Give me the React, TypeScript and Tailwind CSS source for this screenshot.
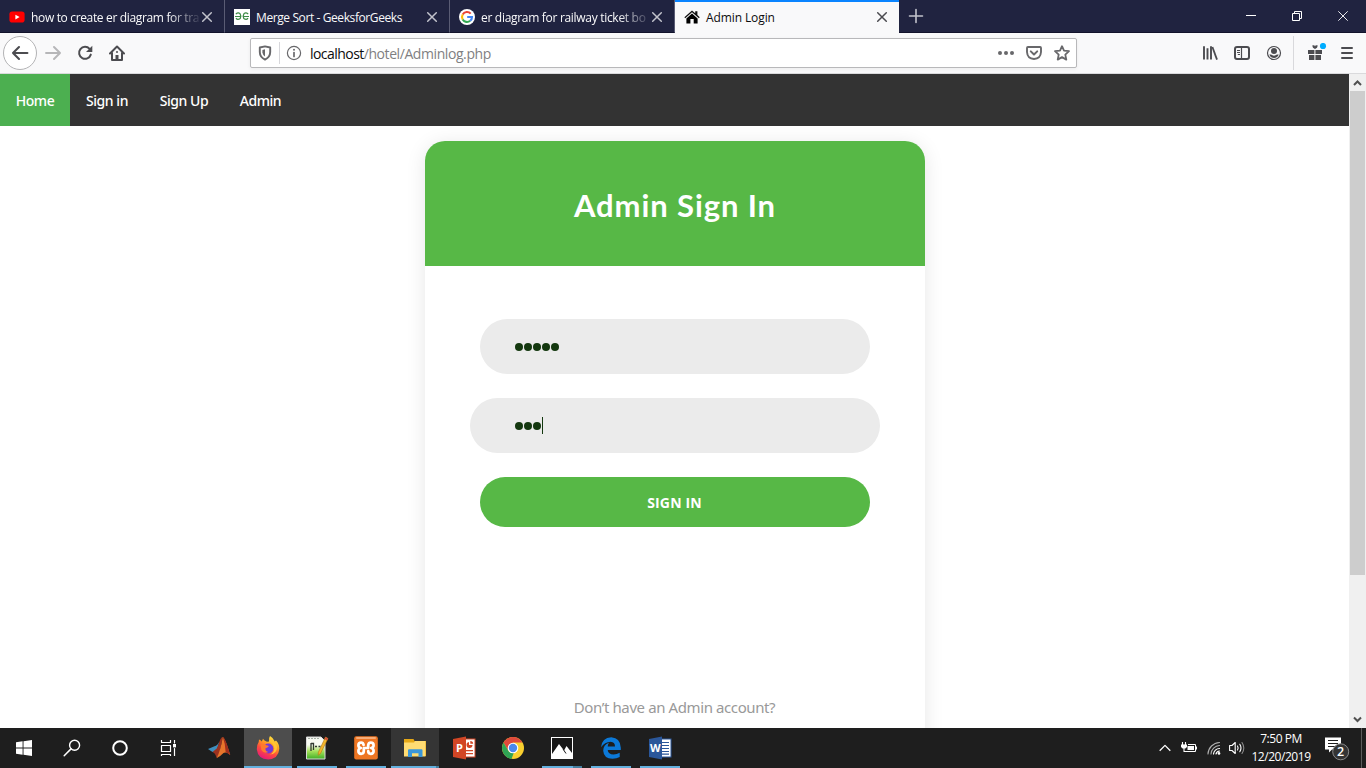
import React from "react";

const stroke = {
  fill: "none",
  stroke: "currentColor",
  strokeLinecap: "round" as const,
  strokeLinejoin: "round" as const,
};

function CloseIcon({ className }: { className: string }) {
  return (
    <svg className={`shrink-0 ${className}`} width="16" height="16" viewBox="0 0 16 16">
      <path d="M3.7 3.7 L12.3 12.3 M12.3 3.7 L3.7 12.3" {...stroke} strokeWidth="1.5" />
    </svg>
  );
}

function YouTubeIcon() {
  return (
    <svg width="16" height="16" viewBox="0 0 16 16">
      <rect x="0.4" y="2.6" width="15.2" height="11" rx="2.8" fill="#ff0000" />
      <path d="M6.4 5.8 L10.6 8.1 L6.4 10.4Z" fill="#fff" />
    </svg>
  );
}

function GeeksIcon() {
  return (
    <svg width="16" height="16" viewBox="0 0 16 16">
      <rect width="16" height="16" fill="#fff" />
      <g fill="none" stroke="#3c8a45" strokeWidth="1.2">
        <path d="M1.8 5.2 Q4 3 6 4.6 Q7.6 7.2 6.2 9.6 Q3.5 11.4 2 9.2 M1 7.5 H7.4" />
        <path d="M14.2 5.2 Q12 3 10 4.6 Q8.4 7.2 9.8 9.6 Q12.5 11.4 14 9.2 M8.6 7.5 H15" />
      </g>
    </svg>
  );
}

function GoogleIcon() {
  return (
    <svg width="16" height="16" viewBox="0 0 16 16">
      <circle cx="8" cy="8" r="8" fill="#fff" />
      <g fill="none" strokeWidth="2.1">
        <path d="M3.7 5.5 A5 5 0 0 1 11.7 4.6" stroke="#ea4335" />
        <path d="M3.7 5.5 A5 5 0 0 0 3.7 10.5" stroke="#fbbc05" />
        <path d="M3.7 10.5 A5 5 0 0 0 11.2 11.8" stroke="#34a853" />
        <path d="M11.2 11.8 A5 5 0 0 0 13 8 H8.2" stroke="#4285f4" />
      </g>
    </svg>
  );
}

function HouseIcon() {
  return (
    <svg width="16" height="16" viewBox="0 0 16 16">
      <path d="M0.4 8.2 L8 1.4 L11.2 4.2 V2.2 H13.4 V6.1 L15.7 8.2 L14.9 9.2 L8 3.2 L1.2 9.2Z" fill="#111" />
      <path d="M2.4 9.4 L8 4.5 L13.6 9.4 V14.4 H9.7 V10 H6.4 V14.4 H2.4Z" fill="#000" />
    </svg>
  );
}

function Tab({
  icon,
  title,
  spacing,
  active,
  fade,
}: {
  icon: React.ReactNode;
  title: string;
  spacing: string;
  active?: boolean;
  fade?: boolean;
}) {
  return (
    <div
      className={
        active
          ? "flex h-[33px] w-[224px] items-center border-t-2 border-[#0a84ff] bg-[#f9f9fa] pl-[9px] pr-[9px] pb-px text-[#0c0c0d]"
          : "flex h-[33px] w-[225px] items-center border-r border-b border-r-[#5a5c74] border-b-[#12132b] bg-[#202340] pl-[9px] pr-[9px] pt-[2px] text-[#f9f9fa]"
      }
    >
      <span className="shrink-0">{icon}</span>
      <span
        className={`mt-px ml-[6px] min-w-0 flex-1 text-[12px] leading-[18px] whitespace-nowrap ${spacing} ${
          fade ? "[mask-image:linear-gradient(to_right,#000_82%,transparent_102%)]" : ""
        }`}
      >
        {title}
      </span>
      <CloseIcon className={active ? "text-[#4a4a4f]" : "text-[#c2c3cc]"} />
    </div>
  );
}

function TabBar() {
  return (
    <div className="flex h-[33px] bg-[#202340]">
      <Tab icon={<YouTubeIcon />} title="how to create er diagram for tra" spacing="tracking-[-0.34px]" fade />
      <Tab icon={<GeeksIcon />} title="Merge Sort - GeeksforGeeks" spacing="tracking-[-0.4px]" />
      <Tab icon={<GoogleIcon />} title="er diagram for railway ticket bo" spacing="tracking-[-0.3px]" fade />
      <Tab icon={<HouseIcon />} title="Admin Login" spacing="tracking-[-0.1px]" active />
      <div className="flex flex-1 items-center border-b border-[#12132b] pl-[9px] text-[#c2c3cc]">
        <svg width="16" height="16" viewBox="0 0 16 16">
          <path d="M8 1.5 V14.5 M1.5 8 H14.5" {...stroke} strokeWidth="1.6" />
        </svg>
      </div>
      <div className="flex items-center border-b border-[#12132b] text-white">
        <div className="flex w-[46px] justify-center">
          <svg width="10" height="10" viewBox="0 0 10 10">
            <path d="M0 4.5 H10" stroke="currentColor" />
          </svg>
        </div>
        <div className="flex w-[46px] justify-center">
          <svg width="10" height="10" viewBox="0 0 10 10" fill="none" stroke="currentColor">
            <path d="M2.5 2.5 V0.5 H9.5 V7.5 H7.5 M0.5 2.5 H7.5 V9.5 H0.5Z" />
          </svg>
        </div>
        <div className="flex w-[46px] justify-center">
          <svg width="10" height="10" viewBox="0 0 10 10">
            <path d="M0.3 0.3 L9.7 9.7 M9.7 0.3 L0.3 9.7" stroke="currentColor" strokeWidth="0.9" />
          </svg>
        </div>
      </div>
    </div>
  );
}

function Toolbar() {
  return (
    <div className="flex h-[41px] items-center border-b border-[#dadadc] bg-[#f9f9fa] text-[#4c4c50]">
      <div className="ml-[3px] flex size-[34px] shrink-0 items-center justify-center rounded-full border border-[#b3b3b5] bg-white">
        <svg width="18" height="16" viewBox="0 0 18 16">
          <path d="M16.4 8 H2 M8 2 L2 8 L8 14" {...stroke} strokeWidth="2.1" />
        </svg>
      </div>
      <svg className="ml-[8px] text-[#b6b6b8]" width="16" height="16" viewBox="0 0 16 16">
        <path d="M1 8 H14.5 M9 2 L15 8 L9 14" {...stroke} strokeWidth="1.9" />
      </svg>
      <svg className="ml-[16px]" width="16" height="16" viewBox="0 0 16 16">
        <path d="M12.6 3.8 A6 6 0 1 0 13.8 9.6" {...stroke} strokeWidth="2" />
        <path d="M15.3 0.8 V7 H9Z" fill="currentColor" />
      </svg>
      <svg className="ml-[16px]" width="16" height="16" viewBox="0 0 16 16">
        <path d="M1 8.5 L8 1.5 L15 8.5" {...stroke} strokeWidth="2" />
        <path d="M3 8 V15 H13 V8" {...stroke} strokeWidth="2" />
        <path d="M6.5 15 V10 H9.5 V15Z" fill="currentColor" />
        <circle cx="8" cy="7" r="1" fill="currentColor" />
      </svg>

      <div className="ml-[125px] flex h-[30px] w-[827px] shrink-0 items-center rounded-[2px] border border-[#b8b8ba] bg-white shadow-[0_1px_4px_rgba(0,0,0,0.06)]">
        <svg className="ml-[6px] text-[#68686b]" width="16" height="16" viewBox="0 0 16 16">
          <path d="M8 1.4 L13.2 2.5 V7 Q13.2 12 8 14.6 Q2.8 12 2.8 7 V2.5Z" {...stroke} strokeWidth="1.9" />
          <path d="M8 4.3 L5.4 4.9 V7.5 Q5.7 10 8 11.4Z" fill="currentColor" />
        </svg>
        <div className="ml-[6px] h-[22px] w-px bg-[#d7d7db]" />
        <svg className="ml-[6px] text-[#68686b]" width="16" height="16" viewBox="0 0 16 16">
          <circle cx="8" cy="8" r="6.6" {...stroke} strokeWidth="1.2" />
          <path d="M8 7.5 V11.5" {...stroke} strokeWidth="1.7" />
          <circle cx="8" cy="4.8" r="1" fill="currentColor" />
        </svg>
        <div className="mt-[2px] ml-[8px] flex-1 text-[14px] leading-[20px] tracking-[-0.42px] whitespace-nowrap text-[#7f7f82]">
          <span className="tracking-[-0.55px] text-[#0c0c0d]">localhost</span>/hotel/Adminlog.php
        </div>
        <svg className="mr-[12px] text-[#68686b]" width="16" height="16" viewBox="0 0 16 16" fill="currentColor">
          <circle cx="2" cy="8" r="2" />
          <circle cx="8" cy="8" r="2" />
          <circle cx="14" cy="8" r="2" />
        </svg>
        <svg className="mr-[12px] text-[#68686b]" width="16" height="16" viewBox="0 0 16 16">
          <path d="M1.9 2 H14.1 Q15 2 15 3 V7 Q14.6 13.6 8 14 Q1.4 13.6 1 7 V3 Q1 2 1.9 2Z" {...stroke} strokeWidth="1.9" />
          <path d="M4.8 6.4 L8 9.5 L11.2 6.4" {...stroke} strokeWidth="2" />
        </svg>
        <svg className="mr-[6px] text-[#68686b]" width="16" height="16" viewBox="0 0 16 16">
          <path
            d="M8 1.2 L10 5.7 L15 6.2 L11.3 9.6 L12.3 14.6 L8 12.1 L3.7 14.6 L4.7 9.6 L1 6.2 L6 5.7Z"
            {...stroke}
            strokeWidth="1.8"
          />
        </svg>
      </div>

      <svg className="ml-[125px]" width="16" height="16" viewBox="0 0 16 16">
        <path d="M2 1.2 V14.6 M5.5 3.2 V14.6 M9 1.2 V14.6" {...stroke} strokeWidth="1.9" strokeLinecap="butt" />
        <path d="M10.4 2 L15 14.6" {...stroke} strokeWidth="1.8" strokeLinecap="butt" />
      </svg>
      <svg className="ml-[16px]" width="16" height="16" viewBox="0 0 16 16">
        <rect x="1" y="2" width="14" height="12" rx="2" {...stroke} strokeWidth="2" />
        <path d="M7.5 2 V14" {...stroke} strokeWidth="1.2" />
        <path d="M3 5.5 H6 M3 7.5 H6 M3.8 9.5 H6" {...stroke} strokeWidth="1" strokeLinecap="butt" />
      </svg>
      <svg className="ml-[16px]" width="16" height="16" viewBox="0 0 16 16">
        <circle cx="8" cy="8" r="6.5" {...stroke} strokeWidth="1.2" />
        <circle cx="8" cy="6.1" r="3" fill="currentColor" />
        <path d="M3.3 9.6 H5 Q8 11.8 11 9.6 H12.7 Q11.5 13 8 13 Q4.5 13 3.3 9.6Z" fill="currentColor" />
      </svg>
      <div className="ml-[11px] h-[34px] w-px bg-[#d9d9dc]" />
      <svg className="ml-[12px]" width="22" height="20" viewBox="0 0 22 20">
        <path d="M2 7 H8.4 V11 H2Z M9.4 7 H16 V11 H9.4Z M3 12 H8.4 V17 H3Z M9.4 12 H15 V17 H9.4Z" fill="currentColor" />
        <path d="M6.2 2.5 Q8.8 1.5 9 3.6 Q9.2 1.5 11.8 2.5 L11 4.8 L9 6 L7 4.8Z" fill="currentColor" />
        <circle cx="17" cy="3" r="3.1" fill="#00adff" />
      </svg>
      <svg className="ml-[11px]" width="16" height="16" viewBox="0 0 16 16">
        <path d="M3 3 H13 M3 8 H13 M3 13 H13" {...stroke} strokeWidth="2" />
      </svg>
    </div>
  );
}

const navItems = [
  { label: "Home", width: "w-[70px]", active: true },
  { label: "Sign in", width: "w-[74px]" },
  { label: "Sign Up", width: "w-[80px]" },
  { label: "Admin", width: "w-[73px]" },
];

function PasswordDots({ count }: { count: number }) {
  return (
    <div className="flex gap-px">
      {Array.from({ length: count }, (_, i) => (
        <span key={i} className="size-[8px] rounded-full bg-[#14380f]" />
      ))}
    </div>
  );
}

function Page() {
  return (
    <div className="flex h-[654px] overflow-hidden bg-white">
      <div className="flex w-[1349px] flex-col font-['Noto_Sans',sans-serif]">
        <nav className="flex h-[52px] shrink-0 bg-[#333333]">
          {navItems.map((item) => (
            <a
              key={item.label}
              className={`flex items-center justify-center text-[14px] font-medium tracking-[-0.45px] whitespace-nowrap text-white ${item.width} ${
                item.active ? "bg-[#4caf50]" : ""
              }`}
            >
              {item.label}
            </a>
          ))}
        </nav>
        <main className="flex flex-1 justify-center overflow-hidden pt-[15px]">
          <form className="flex h-[680px] w-[500px] shrink-0 flex-col items-center rounded-[20px] bg-white shadow-[0_3px_20px_rgba(0,0,0,0.1)]">
            <h1 className="flex h-[125px] w-full items-center justify-center rounded-t-[20px] bg-[#57b846] pt-[3px] pl-px font-['Lato',sans-serif] text-[31px] font-bold tracking-[0.9px] text-white">
              Admin Sign In
            </h1>
            <div className="mt-[53px] flex h-[55px] w-[390px] shrink-0 items-center rounded-full bg-[#ebebeb] pt-px pl-[35px]">
              <PasswordDots count={5} />
            </div>
            <div className="mt-[24px] flex h-[55px] w-[410px] shrink-0 items-center rounded-full bg-[#ebebeb] pl-[45px]">
              <div className="pt-px">
                <PasswordDots count={3} />
              </div>
              <span className="ml-[1px] h-[17px] w-px bg-[#14380f]" />
            </div>
            <button className="mt-[24px] h-[50px] w-[390px] shrink-0 rounded-full bg-[#57b846] font-['Open_Sans',sans-serif] text-[14px] font-bold tracking-[0.15px] text-white">
              SIGN IN
            </button>
            <p className="mt-[169px] text-[15px] leading-[22px] tracking-[-0.4px] whitespace-nowrap text-[#999999]">
              Don’t have an Admin account?
            </p>
          </form>
        </main>
      </div>
      <div className="flex w-[17px] flex-col items-center bg-[#f0f0f0] text-[#505050]">
        <svg className="shrink-0" width="17" height="17" viewBox="0 0 17 17">
          <path d="M5 11 L8.5 7.5 L12 11" fill="none" stroke="currentColor" strokeWidth="2" />
        </svg>
        <div className="h-[484px] w-[15px] bg-[#cdcdcd]" />
        <svg className="mt-auto shrink-0" width="17" height="17" viewBox="0 0 17 17">
          <path d="M5 6.5 L8.5 10 L12 6.5" fill="none" stroke="currentColor" strokeWidth="2" />
        </svg>
      </div>
    </div>
  );
}

function TaskButton({
  children,
  bg = "",
  line,
}: {
  children: React.ReactNode;
  bg?: string;
  line?: React.ReactNode;
}) {
  return (
    <div className={`mr-px flex h-[40px] w-[48px] shrink-0 flex-col items-center ${bg}`}>
      <div className="flex h-[38px] items-center pt-[2px]">{children}</div>
      {line}
    </div>
  );
}

const shortLine = <div className="h-[2px] w-[40px] bg-[#63b0de]" />;

function Office({ color, dark, letter, children }: { color: string; dark: string; letter: string; children: React.ReactNode }) {
  return (
    <svg width="24" height="24" viewBox="0 0 24 24">
      <rect x="11" y="3" width="12" height="18" fill="#fff" stroke={color} strokeWidth="1" />
      {children}
      <path d="M1 3 L14 0.5 V23.5 L1 21Z" fill={dark} />
      <text x="7.4" y="16" textAnchor="middle" fontSize="11" fontWeight="bold" fill="#fff" className="font-['Open_Sans',sans-serif]">
        {letter}
      </text>
    </svg>
  );
}

function Taskbar() {
  return (
    <div className="flex h-[40px] items-center overflow-hidden bg-[#1e1e1e] text-white">
      <div className="flex h-[40px] w-[48px] items-center justify-center">
        <svg width="16" height="16" viewBox="0 0 16 16" fill="#fff">
          <path d="M0 2.3 L6.6 1.3 V7.5 H0Z M7.5 1.2 L16 0 V7.5 H7.5Z M0 8.4 H6.6 V14.7 L0 13.8Z M7.5 8.4 H16 V16 L7.5 14.8Z" />
        </svg>
      </div>
      <div className="flex h-[40px] w-[48px] items-center justify-center">
        <svg width="18" height="18" viewBox="0 0 18 18">
          <circle cx="11.6" cy="6.3" r="5" {...stroke} strokeWidth="1.4" />
          <path d="M8 9.9 L1.2 16.7" {...stroke} strokeWidth="1.5" />
        </svg>
      </div>
      <div className="flex h-[40px] w-[48px] items-center justify-center">
        <svg width="18" height="18" viewBox="0 0 18 18">
          <circle cx="9" cy="9" r="6.8" {...stroke} strokeWidth="2" />
        </svg>
      </div>
      <div className="mr-[3px] flex h-[40px] w-[48px] items-center justify-center">
        <svg width="17" height="16" viewBox="0 0 17 16">
          <path d="M1.5 0 V2.5 H10.5 V0 M1.5 5.5 H10.5 V11.5 H1.5Z M1.5 16 V14.5 H10.5 V16 M14.5 0 V3 M14.5 8.5 V16" {...stroke} strokeWidth="1.2" />
          <rect x="13" y="4" width="3" height="3.4" fill="#fff" />
        </svg>
      </div>

      <TaskButton>
        <svg width="24" height="24" viewBox="0 0 24 24">
          <path d="M1 13 L7.5 10.3 Q10.5 9.6 12.5 5.5 L9 16.5 L5.5 16Z" fill="#3f8fbe" />
          <path d="M5.5 16 L10 12.2 L12.5 5.5 Q14 1.2 15.8 1 L12.8 16 Q11 20.5 9.5 21.8 Q8.5 17 5.5 16Z" fill="#9c3220" />
          <path d="M15.8 1 Q18 2 23.2 19 Q19.2 15.5 16.5 17 Q13.5 20.2 9.5 22.2 Q13.5 15 15.8 1Z" fill="#e8752b" />
          <path d="M15.8 1 Q18.5 2 23.2 19 Q20.5 16.5 18.7 16.5 Q18.5 8 15.8 1Z" fill="#a12e1c" />
        </svg>
      </TaskButton>
      <TaskButton bg="bg-[#4d4d4d]" line={<div className="h-[2px] w-[48px] bg-[#63b0de]" />}>
        <svg width="24" height="24" viewBox="0 0 24 24">
          <defs>
            <linearGradient id="fx" x1="0.8" y1="0" x2="0.3" y2="1">
              <stop offset="0" stopColor="#fff04a" />
              <stop offset="0.35" stopColor="#ffa521" />
              <stop offset="0.65" stopColor="#ff4b3d" />
              <stop offset="1" stopColor="#e4177d" />
            </linearGradient>
          </defs>
          <path
            d="M14 0 Q17.5 2 18.8 5.4 L20 4.6 Q23.4 8 23.3 12.8 Q22.5 23 12.2 23.4 Q1.8 23 0.8 13.2 Q0.6 9 2.7 6 L3 3.4 Q4.7 4.1 5.8 5.4 L7 2.8 Q8 5 11 5.7 L13 5.6 Q12.4 2.2 14 0Z"
            fill="url(#fx)"
          />
          <circle cx="12.3" cy="12.5" r="5" fill="#7139d8" />
          <path d="M4.5 8.5 Q8 7 10.3 9.3 L13 10 Q11.5 12 9.5 12.2 Q9 15.2 12.4 16 Q8 18.2 5.4 14Z" fill="#ff7a2c" />
          <path d="M13 5.6 Q18 7.3 18.3 12.4 Q18 17 13.5 18.5 Q21 18.2 21 11 Q19.8 6.2 14.5 3Z" fill="#ffc533" />
        </svg>
      </TaskButton>
      <TaskButton line={shortLine}>
        <svg width="24" height="24" viewBox="0 0 24 24">
          <defs>
            <linearGradient id="np" x1="0" y1="0" x2="0" y2="1">
              <stop offset="0.35" stopColor="#f7f9f2" />
              <stop offset="0.65" stopColor="#a4e05a" />
              <stop offset="1" stopColor="#3fae26" />
            </linearGradient>
          </defs>
          <path d="M1.5 1 H16 L20 5 V23 H1.5Z" fill="url(#np)" stroke="#d9d9d9" />
          <path d="M3 2.5 H15" stroke="#a7afa6" strokeWidth="1.2" strokeDasharray="2 1" />
          <path d="M6 15 V7 M6 7.5 H8.5 V14 M10 10.5 H12 M13.5 10.5 H15.5" stroke="#303830" strokeWidth="1.3" fill="none" />
          <path d="M20.5 1 L23 2.5 L15.5 17.5 L13.2 19.2 L13.4 16.2Z" fill="#f0b62c" stroke="#b57512" strokeWidth="0.6" />
          <path d="M20.5 1 L23 2.5 L22 4.5 L19.5 3Z" fill="#d04c3b" />
        </svg>
      </TaskButton>
      <TaskButton line={shortLine}>
        <svg width="24" height="24" viewBox="0 0 24 24">
          <rect x="0.2" y="0.2" width="23.6" height="23.4" rx="2" fill="#ee7623" />
          <rect x="2" y="0.9" width="20" height="2" rx="1" fill="#f7ad78" />
          <path
            d="M11 12 H13 M9.6 8.9 Q9.2 6.6 7.2 6.6 Q4.4 6.6 4.4 9.2 Q4.4 11.4 6.8 12 Q4.4 12.6 4.4 15 Q4.4 17.8 7.2 17.8 Q9.6 17.8 9.8 15.2 V12 H14.2 V8.9 Q14.6 6.6 16.8 6.6 Q19.6 6.6 19.6 9.2 Q19.6 11.4 17.2 12 Q19.6 12.6 19.6 15 Q19.6 17.8 16.8 17.8 Q14.4 17.8 14.2 15.2"
            {...stroke}
            stroke="#fff"
            strokeWidth="2.7"
          />
        </svg>
      </TaskButton>
      <TaskButton
        bg="bg-[#353535]"
        line={
          <div className="flex h-[2px] w-[48px]">
            <div className="w-[45px] bg-[#63b0de]" />
            <div className="w-[3px] bg-[#467f9f]" />
          </div>
        }
      >
        <svg width="24" height="24" viewBox="0 0 24 24">
          <path d="M1 3 H10.5 L11.5 5 H23 V20 H1Z" fill="#e6a817" />
          <path d="M1 6.5 H11 L12 5 H22.5 V20.5 H1Z" fill="#ffdc73" />
          <path d="M5 21 V14.2 Q5 13.2 6 13.2 H18.5 Q19.5 13.2 19.5 14.2 V21 H15.5 V17.3 H9 V21Z" fill="#3b97d9" />
        </svg>
      </TaskButton>
      <TaskButton line={<div className="h-[2px]" />}>
        <Office color="#d24726" dark="#d24625" letter="P">
          <path d="M17 6 A3 3 0 1 0 20.5 9 H17Z" fill="#d24726" />
          <path d="M18.3 5 A3 3 0 0 1 21.2 7.8 H18.3Z M14 14 H21 V15.2 H14Z M14 17 H21 V18.2 H14Z" fill="#d24726" />
        </Office>
      </TaskButton>
      <TaskButton line={<div className="h-[2px]" />}>
        <svg width="24" height="24" viewBox="0 0 24 24">
          <circle cx="12" cy="12" r="11" fill="#f9cf2f" />
          <path d="M2.5 6.5 A11 11 0 0 1 21.5 6.5 H12 L7.3 14.7Z" fill="#df4a3c" />
          <path d="M2.5 6.5 L7.3 14.7 Q9 17.5 12.7 17 L10.5 22.9 A11 11 0 0 1 2.5 6.5Z" fill="#2fa455" />
          <circle cx="12" cy="12" r="5.3" fill="#fff" />
          <circle cx="12" cy="12" r="4.2" fill="#4a88ee" />
        </svg>
      </TaskButton>
      <TaskButton
        line={
          <div className="flex h-[2px] w-[40px]">
            <div className="w-[31px] bg-[#63b0de]" />
            <div className="w-[9px] bg-[#467f9f]" />
          </div>
        }
      >
        <svg width="22" height="22" viewBox="0 0 22 22">
          <rect x="0.5" y="0.5" width="21" height="21" fill="#171717" stroke="#fff" />
          <path d="M1 17 L8 7 L13 13.5 L15.5 9 L21 16 V21.5 H1Z" fill="#fff" />
          <path d="M12 12 L15 16.5" stroke="#171717" strokeWidth="1" />
        </svg>
      </TaskButton>
      <TaskButton line={shortLine}>
        <svg width="24" height="24" viewBox="0 0 24 24">
          <path
            d="M2 11.3 Q3 1.5 12.3 1.2 Q21.5 1.8 21.8 11.8 V14 H8.7 Q9.2 18.4 14.5 18.6 Q18 18.4 20.7 16.8 V21.1 Q17.7 22.8 13.5 22.8 Q4.7 22.5 4.2 14.7 Q4.3 9 10 6.8 Q8.8 8.3 8.7 10.4 H16 Q16 6 11.6 5.7 Q5.7 5.8 2 11.3Z"
            fill="#0c79d8"
          />
        </svg>
      </TaskButton>
      <TaskButton line={shortLine}>
        <Office color="#2b579a" dark="#2b579a" letter="W">
          <path d="M14 6.5 H21 M14 9.5 H21 M14 12.5 H21 M14 15.5 H21 M14 18.2 H21" stroke="#2b579a" strokeWidth="1.2" />
        </Office>
      </TaskButton>

      <div className="ml-auto flex h-[40px] items-center">
        <svg width="12" height="8" viewBox="0 0 12 8">
          <path d="M0.7 6.7 L6 1.4 L11.3 6.7" {...stroke} strokeWidth="1.3" strokeLinecap="butt" />
        </svg>
        <svg className="ml-[10px]" width="17" height="12" viewBox="0 0 17 12">
          <path d="M1.5 0 V3 M4.5 0 V3 M3 3 V9.5 H5" {...stroke} strokeWidth="1.1" />
          <path d="M0 2.5 H6 V5 L4.4 6.5 H1.6 L0 5Z" fill="#fff" />
          <path d="M7 2.5 H14.5 V9.5 H5" fill="none" stroke="#fff" />
          <rect x="6.5" y="4" width="6.5" height="4" fill="#fff" />
          <rect x="15" y="4.5" width="1" height="3" fill="#fff" />
        </svg>
        <svg className="ml-[9px]" width="14" height="14" viewBox="0 0 14 14">
          <path d="M1 13 A12 12 0 0 1 12.5 1.5 M4 13 A9 9 0 0 1 12.5 4.5" {...stroke} stroke="#b0b0b0" strokeWidth="1.1" />
          <path d="M6.5 13 A6 6 0 0 1 12.5 7.5 M9 13 A4 4 0 0 1 12.5 10" {...stroke} strokeWidth="1.2" />
          <circle cx="12" cy="12.4" r="1.3" fill="#fff" />
        </svg>
        <svg className="ml-[8px]" width="16" height="14" viewBox="0 0 16 14">
          <path d="M0.6 4.5 H3 L6.2 1.5 V12.5 L3 9.5 H0.6Z" {...stroke} strokeWidth="1.1" />
          <path d="M8.5 5 Q9.8 7 8.5 9 M10.8 3.3 Q13.2 7 10.8 10.7" {...stroke} strokeWidth="1.1" />
          <path d="M13 1.5 Q16.6 7 13 12.5" {...stroke} stroke="#8c8c8c" strokeWidth="1.1" />
        </svg>
        <div className="ml-px flex w-[70px] flex-col items-center text-[12px] leading-[18px] tracking-[-0.45px] whitespace-nowrap">
          <span>7:50 PM</span>
          <span>12/20/2019</span>
        </div>
        <svg className="ml-[9px]" width="25" height="26" viewBox="0 0 25 26">
          <path d="M0 2.5 H16 V14.5 H7 L4 17.5 V14.5 H0Z" fill="#fff" />
          <path d="M3 5.5 H13 M3 8.5 H13 M3 11.5 H10" stroke="#1e1e1e" />
          <circle cx="15.7" cy="16.8" r="8" fill="#343434" stroke="#8a8a8a" />
          <text x="15.7" y="21.2" textAnchor="middle" fontSize="12.5" fontWeight="600" fill="#fff">
            2
          </text>
        </svg>
        <div className="mr-[4px] ml-[11px] h-[40px] w-px bg-[#5c5c5c]" />
      </div>
    </div>
  );
}

export default function App() {
  return (
    <div className="flex h-[768px] w-[1366px] flex-col overflow-hidden font-['Open_Sans',sans-serif]">
      <TabBar />
      <Toolbar />
      <Page />
      <Taskbar />
    </div>
  );
}
